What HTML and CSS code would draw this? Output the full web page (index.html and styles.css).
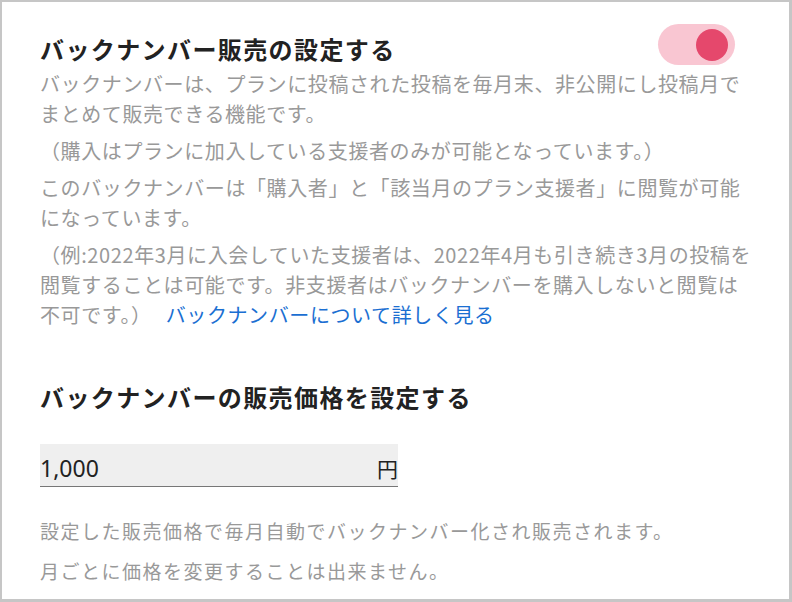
FILE: index.html
```html
<!DOCTYPE html>
<html lang="ja">
<head>
<meta charset="utf-8">
<link rel="stylesheet" href="styles.css">
</head>
<body>
<div class="frame">
  <section class="section">
    <div class="head-row">
      <h2 class="title">バックナンバー販売の設定する</h2>
      <div class="toggle"><span class="knob"></span></div>
    </div>
    <p class="desc">バックナンバーは、プランに投稿された投稿を毎月末、非公開にし投稿月でまとめて販売できる機能です。</p>
    <p class="desc">（購入はプランに加入している支援者のみが可能となっています。）</p>
    <p class="desc">このバックナンバーは「購入者」と「該当月のプラン支援者」に閲覧が可能になっています。</p>
    <p class="desc">（例:2022年3月に入会していた支援者は、2022年4月も引き続き3月の投稿を閲覧することは可能です。非支援者はバックナンバーを購入しないと閲覧は不可です。） <a class="link" href="#">バックナンバーについて詳しく見る</a></p>
  </section>
  <section class="section price">
    <h2 class="title">バックナンバーの販売価格を設定する</h2>
    <div class="field">
      <span class="value">1,000</span>
      <span class="unit">円</span>
    </div>
    <p class="note first">設定した販売価格で毎月自動でバックナンバー化され販売されます。</p>
    <p class="note">月ごとに価格を変更することは出来ません。</p>
  </section>
</div>
</body>
</html>
```

FILE: styles.css
```css
* { box-sizing: border-box; }
html, body { margin: 0; padding: 0; background: #fff; }
body {
  font-family: "Noto Sans CJK JP", "Noto Sans", sans-serif;
  color: #222;
}
.frame {
  width: 792px;
  height: 602px;
  border: 2px solid #c6c6c6;
  border-right-width: 3px;
  border-bottom-width: 3px;
  padding: 22px 38px 0 38px;
  overflow: hidden;
}
.head-row {
  display: flex;
  justify-content: space-between;
  align-items: flex-start;
}
.title {
  margin: 0;
  font-size: 24px;
  font-weight: 700;
  letter-spacing: 1.4px;
  line-height: 34px;
  color: #222;
  padding-top: 8px;
}
.toggle {
  width: 77px;
  height: 41px;
  border-radius: 21px;
  background: #f9c6d2;
  margin-right: 16px;
  display: flex;
  align-items: center;
  justify-content: flex-end;
  padding-right: 7px;
  flex-shrink: 0;
}
.knob {
  width: 32px;
  height: 32px;
  border-radius: 50%;
  background: #e5486c;
}
.desc {
  margin: 0 0 7px;
  font-size: 20px;
  letter-spacing: 0.6px;
  line-height: 30px;
  color: #999;
  width: 714px;
}
.head-row + .desc { margin-top: 3px; }
.link {
  color: #1b6fd2;
  text-decoration: none;
  margin-left: 9px;
}
.price { margin-top: 50px; }
.price .title { padding-top: 0; }
.field {
  margin-top: 30px;
  width: 358px;
  height: 43px;
  background: #efefef;
  border-bottom: 1.5px solid #777;
  display: flex;
  align-items: center;
  justify-content: space-between;
  padding-top: 6px;
  font-size: 21px;
  color: #222;
}
.value { font-family: "Noto Sans", "Open Sans", sans-serif; font-size: 23px; }
.unit { font-size: 21px; }
.note {
  margin: 0;
  font-size: 19px;
  letter-spacing: 1.5px;
  line-height: 40px;
  color: #999;
}
.note.first { margin-top: 24px; }
```
